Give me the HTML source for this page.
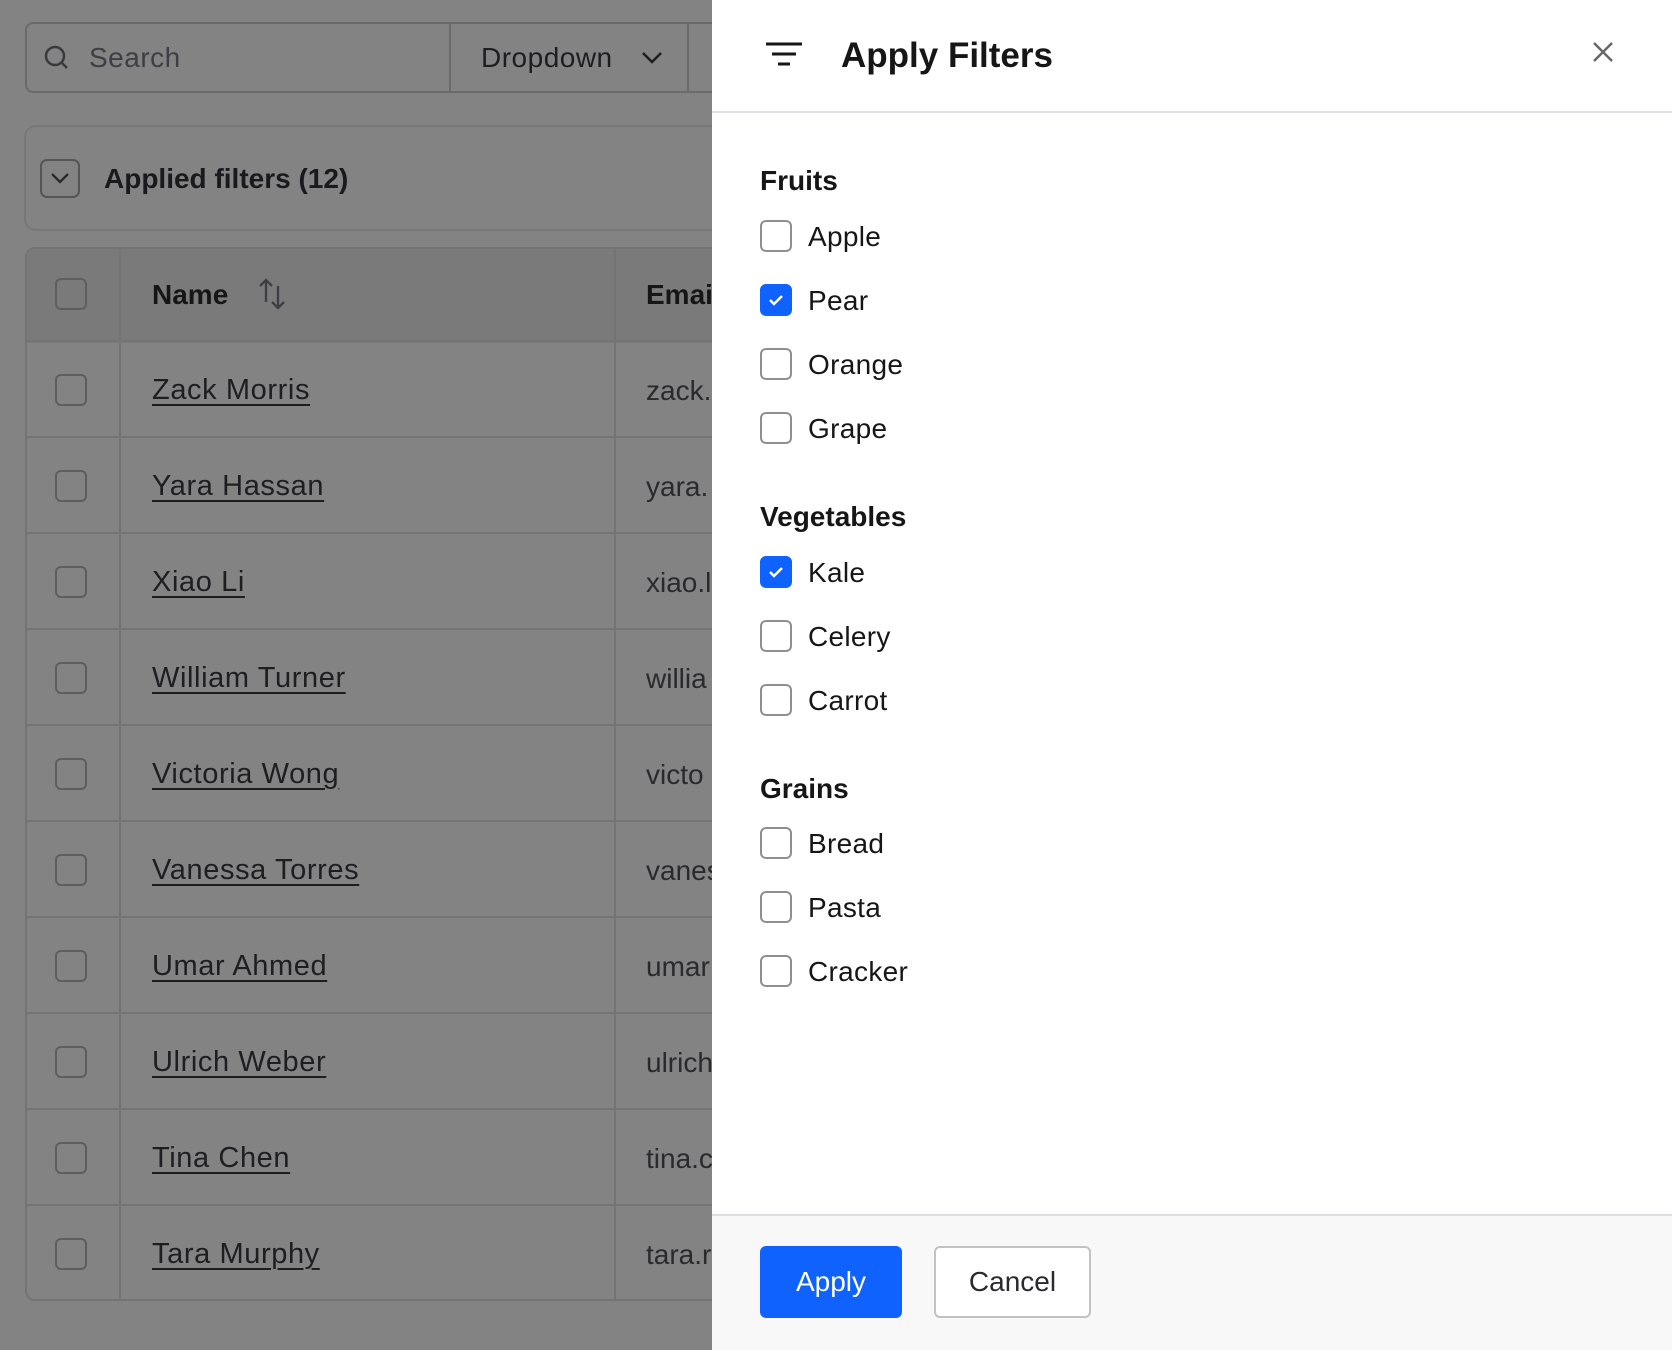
<!DOCTYPE html>
<html><head><meta charset="utf-8"><style>
*{box-sizing:border-box;margin:0;padding:0}
body{width:1672px;height:1350px;overflow:hidden;background:#838383;font-family:"Liberation Sans",sans-serif;position:relative;color:#1e1e22}
.abs{position:absolute}
.cb{position:absolute;width:32px;height:32px;border:2px solid #5e5e62;border-radius:6px}
.name{position:absolute;left:152px;font-size:29px;letter-spacing:0.6px;text-decoration:underline;text-underline-offset:5px;text-decoration-thickness:2px;color:#1e1e22}
.email{position:absolute;left:646px;font-size:28px;color:#2a2a2e}
.hl{position:absolute;left:25px;width:690px;height:2px;background:#747474}
.panel{position:absolute;left:712px;top:0;width:960px;height:1350px;background:#fff}
.pcb{position:absolute;left:760px;width:32px;height:32px;border:2px solid #8e8e94;border-radius:6px;background:#fff}
.pcb.on{background:#0f62fe;border-color:#0f62fe}
.lbl{position:absolute;left:808px;font-size:28px;color:#161616;line-height:32px;letter-spacing:0.3px}
.h{position:absolute;left:760px;font-size:28px;font-weight:bold;color:#161616}
</style></head><body>
<div class="abs" style="left:25px;top:22px;width:700px;height:71px;border:2px solid #6a6a6a;border-radius:8px"></div>
<div class="abs" style="left:449px;top:22px;width:2px;height:71px;background:#6a6a6a"></div>
<div class="abs" style="left:687px;top:22px;width:2px;height:71px;background:#6a6a6a"></div>
<svg class="abs" style="left:42px;top:43px" width="30" height="30" viewBox="0 0 30 30"><circle cx="13" cy="13" r="9" fill="none" stroke="#3a3a3e" stroke-width="2.5"/><line x1="19.5" y1="19.5" x2="25" y2="25" stroke="#3a3a3e" stroke-width="2.5"/></svg>
<div class="abs" style="left:89px;top:42px;font-size:28px;color:#3e3e44;letter-spacing:0.5px">Search</div>
<div class="abs" style="left:481px;top:42px;font-size:28px;color:#1e1e22;letter-spacing:0.5px">Dropdown</div>
<svg class="abs" style="left:640px;top:50px" width="24" height="16"><path d="M3 3l9 9 9-9" fill="none" stroke="#1e1e22" stroke-width="2.5"/></svg>
<div class="abs" style="left:24px;top:125px;width:700px;height:106px;border:2px solid #777;border-radius:12px"></div>
<div class="abs" style="left:40px;top:159px;width:40px;height:39px;border:2px solid #555;border-radius:7px"></div>
<svg class="abs" style="left:48px;top:170px" width="24" height="16"><path d="M4 4l8 8 8-8" fill="none" stroke="#2a2a2e" stroke-width="2.3"/></svg>
<div class="abs" style="left:104px;top:163px;font-size:28px;font-weight:bold;color:#1a1a1e">Applied filters (12)</div>
<div class="abs" style="left:25px;top:247px;width:700px;height:1054px;border:2px solid #747474;border-radius:10px;overflow:hidden">
  <div style="height:94px;background:#7a7a7a"></div>
</div>
<div class="abs" style="left:119px;top:247px;width:2px;height:1054px;background:#747474"></div>
<div class="abs" style="left:614px;top:247px;width:2px;height:1054px;background:#747474"></div>
<div class="hl" style="top:340px"></div>
<div class="hl" style="top:436px"></div><div class="hl" style="top:532px"></div><div class="hl" style="top:628px"></div><div class="hl" style="top:724px"></div><div class="hl" style="top:820px"></div><div class="hl" style="top:916px"></div><div class="hl" style="top:1012px"></div><div class="hl" style="top:1108px"></div><div class="hl" style="top:1204px"></div>
<div class="cb" style="left:55px;top:278px"></div>
<div class="abs" style="left:152px;top:279px;font-size:28px;font-weight:bold;color:#161616">Name</div>
<svg class="abs" style="left:256px;top:276px" width="34" height="36" viewBox="0 0 34 36"><path d="M10 26V4M4 10l6-6 6 6M22 10v22M16 26l6 6 6-6" fill="none" stroke="#3e3e44" stroke-width="2.3"/></svg>
<div class="abs" style="left:646px;top:279px;font-size:28px;font-weight:bold;color:#161616">Email</div>

<div class="cb" style="left:55px;top:374px"></div><div class="name" style="top:374px">Zack Morris</div><div class="email" style="top:375px">zack.</div>
<div class="cb" style="left:55px;top:470px"></div><div class="name" style="top:470px">Yara Hassan</div><div class="email" style="top:471px">yara.</div>
<div class="cb" style="left:55px;top:566px"></div><div class="name" style="top:566px">Xiao Li</div><div class="email" style="top:567px">xiao.l</div>
<div class="cb" style="left:55px;top:662px"></div><div class="name" style="top:662px">William Turner</div><div class="email" style="top:663px">willia</div>
<div class="cb" style="left:55px;top:758px"></div><div class="name" style="top:758px">Victoria Wong</div><div class="email" style="top:759px">victo</div>
<div class="cb" style="left:55px;top:854px"></div><div class="name" style="top:854px">Vanessa Torres</div><div class="email" style="top:855px">vanes</div>
<div class="cb" style="left:55px;top:950px"></div><div class="name" style="top:950px">Umar Ahmed</div><div class="email" style="top:951px">umar</div>
<div class="cb" style="left:55px;top:1046px"></div><div class="name" style="top:1046px">Ulrich Weber</div><div class="email" style="top:1047px">ulrich</div>
<div class="cb" style="left:55px;top:1142px"></div><div class="name" style="top:1142px">Tina Chen</div><div class="email" style="top:1143px">tina.c</div>
<div class="cb" style="left:55px;top:1238px"></div><div class="name" style="top:1238px">Tara Murphy</div><div class="email" style="top:1239px">tara.r</div>

<div class="panel">
  <div style="position:absolute;left:0;top:111px;width:960px;height:2px;background:#dedee3"></div>
  <div style="position:absolute;left:0;top:1214px;width:960px;height:136px;background:#f8f8f8;border-top:2px solid #dedee3"></div>
</div>
<svg class="abs" style="left:764px;top:40px" width="40" height="30"><path d="M2 4h36M8 14h24M14 24h12" stroke="#161616" stroke-width="3"/></svg>
<div class="abs" style="left:841px;top:36px;font-size:35px;font-weight:bold;color:#161616">Apply Filters</div>
<svg class="abs" style="left:1591px;top:40px" width="24" height="24"><path d="M3 3l18 18M21 3L3 21" stroke="#666" stroke-width="2.4"/></svg>

<div class="h" style="top:165px">Fruits</div>
<div class="pcb" style="top:220px"></div><div class="lbl" style="top:221px">Apple</div>
<div class="pcb on" style="top:284px"><svg width="28" height="28" style="position:absolute;left:0;top:0"><path d="M8 14l4 4 8-8" fill="none" stroke="#fff" stroke-width="2.5"/></svg></div><div class="lbl" style="top:285px">Pear</div>
<div class="pcb" style="top:348px"></div><div class="lbl" style="top:349px">Orange</div>
<div class="pcb" style="top:412px"></div><div class="lbl" style="top:413px">Grape</div>
<div class="h" style="top:501px">Vegetables</div>
<div class="pcb on" style="top:556px"><svg width="28" height="28" style="position:absolute;left:0;top:0"><path d="M8 14l4 4 8-8" fill="none" stroke="#fff" stroke-width="2.5"/></svg></div><div class="lbl" style="top:557px">Kale</div>
<div class="pcb" style="top:620px"></div><div class="lbl" style="top:621px">Celery</div>
<div class="pcb" style="top:684px"></div><div class="lbl" style="top:685px">Carrot</div>
<div class="h" style="top:773px">Grains</div>
<div class="pcb" style="top:827px"></div><div class="lbl" style="top:828px">Bread</div>
<div class="pcb" style="top:891px"></div><div class="lbl" style="top:892px">Pasta</div>
<div class="pcb" style="top:955px"></div><div class="lbl" style="top:956px">Cracker</div>

<div class="abs" style="left:760px;top:1246px;width:142px;height:72px;background:#0f62fe;border-radius:6px;color:#fff;font-size:28px;line-height:72px;text-align:center">Apply</div>
<div class="abs" style="left:934px;top:1246px;width:157px;height:72px;background:#fff;border:2px solid #c2c2c2;border-radius:6px;color:#2a2a2e;font-size:28px;line-height:68px;text-align:center">Cancel</div>
</body></html>
